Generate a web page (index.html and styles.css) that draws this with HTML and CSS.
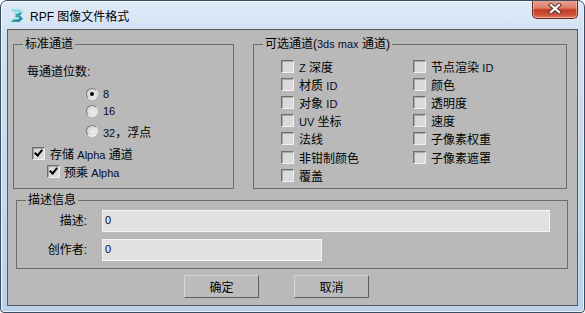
FILE: index.html
```html
<!DOCTYPE html>
<html lang="zh">
<head>
<meta charset="utf-8">
<title>RPF 图像文件格式</title>
<link rel="stylesheet" href="styles.css">
</head>
<body>
<div class="window">
  <div class="titlebar">
    <svg class="appicon" width="14" height="15" viewBox="0 0 14 15">
      <defs>
        <linearGradient id="ig" x1="0" y1="0" x2="1" y2="1">
          <stop offset="0" stop-color="#5fd0d6"/>
          <stop offset="1" stop-color="#0f7f8c"/>
        </linearGradient>
      </defs>
      <path d="M1 1h8l4 3.3-3 3.2 3 3.3-4 3.2H1l2.2-2.8H8.2l1-0.9-1-1H4.6l1.4-1.8-1.4-1.9h3.6l1-0.9-1-0.9H3.2z" fill="url(#ig)"/>
      <path d="M1 1h8l4 3.3-1.2 1.2L8.6 3.6H3.2z" fill="#8fe6ea"/>
    </svg>
    <span class="title"><span class="en">RPF</span> 图像文件格式</span>
    <div class="close">
      <svg width="14" height="11" viewBox="0 0 14 11">
        <path d="M3 2l8 7M11 2l-8 7" stroke="#5a3a36" stroke-width="4.2" stroke-linecap="square"/>
        <path d="M3 2l8 7M11 2l-8 7" stroke="#ffffff" stroke-width="2.2" stroke-linecap="square"/>
      </svg>
    </div>
  </div>
  <div class="client">
    <div class="groups">
      <div class="group std">
        <span class="legend">标准通道</span>
        <div class="label-row">每通道位数:</div>
        <div class="opt-row r1"><span class="radio on"></span><span class="txt"><span class="en">8</span></span></div>
        <div class="opt-row r2"><span class="radio"></span><span class="txt"><span class="en">16</span></span></div>
        <div class="opt-row r3"><span class="radio"></span><span class="txt"><span class="en">32</span>，浮点</span></div>
        <div class="opt-row c1"><span class="check on"></span><span class="txt">存储 <span class="en">Alpha</span> 通道</span></div>
        <div class="opt-row c2"><span class="check on"></span><span class="txt">预乘 <span class="en">Alpha</span></span></div>
      </div>
      <div class="group extra">
        <span class="legend">可选通道(<span class="en">3ds max</span> 通道)</span>
        <div class="extra-grid">
          <div class="item"><span class="check"></span><span class="txt"><span class="en">Z</span> 深度</span></div>
          <div class="item"><span class="check"></span><span class="txt">材质 <span class="en">ID</span></span></div>
          <div class="item"><span class="check"></span><span class="txt">对象 <span class="en">ID</span></span></div>
          <div class="item"><span class="check"></span><span class="txt"><span class="en">UV</span> 坐标</span></div>
          <div class="item"><span class="check"></span><span class="txt">法线</span></div>
          <div class="item"><span class="check"></span><span class="txt">非钳制颜色</span></div>
          <div class="item"><span class="check"></span><span class="txt">覆盖</span></div>
          <div class="item"><span class="check"></span><span class="txt">节点渲染 <span class="en">ID</span></span></div>
          <div class="item"><span class="check"></span><span class="txt">颜色</span></div>
          <div class="item"><span class="check"></span><span class="txt">透明度</span></div>
          <div class="item"><span class="check"></span><span class="txt">速度</span></div>
          <div class="item"><span class="check"></span><span class="txt">子像素权重</span></div>
          <div class="item"><span class="check"></span><span class="txt">子像素遮罩</span></div>
        </div>
      </div>
    </div>
    <div class="group desc">
      <span class="legend">描述信息</span>
      <div class="form">
        <label class="flabel">描述:</label>
        <div class="input wide"><span class="en">0</span></div>
        <label class="flabel">创作者:</label>
        <div class="input narrow"><span class="en">0</span></div>
      </div>
    </div>
    <div class="buttons">
      <div class="btn">确定</div>
      <div class="btn">取消</div>
    </div>
  </div>
</div>
</body>
</html>
```
FILE: styles.css
```css
html, body {
  margin: 0;
  padding: 0;
  background: #ffffff;
}
body {
  font-family: "Liberation Sans", "Noto Sans CJK SC", sans-serif;
  font-size: 12px;
  color: #000;
}
.en {
  font-family: "Liberation Sans", sans-serif;
  font-size: 11px;
  color: #0a0a28;
}
.txt {
  white-space: nowrap;
}
.window {
  position: relative;
  width: 585px;
  height: 313px;
  box-sizing: border-box;
  border: 1px solid #3d4d60;
  border-radius: 7px 7px 4px 4px;
  background: linear-gradient(to bottom, #dfeaf7 0%, #cfe0f2 12%, #c4d8ee 60%, #bcd2ea 100%);
  box-shadow: inset 1px 1px 0 #f2f7fc, inset -1px -1px 0 #e8f0f9;
  display: flex;
  flex-direction: column;
  overflow: hidden;
}
.titlebar {
  height: 28px;
  flex: none;
  display: flex;
  align-items: center;
  padding-left: 9px;
  gap: 6px;
}
.appicon {
  display: block;
  margin-top: 1px;
}
.title {
  font-family: "Liberation Sans", "Noto Sans CJK SC", sans-serif;
  font-size: 12px;
  color: #000;
  margin-top: 1px;
}
.title .en {
  font-size: 12px;
  color: #000;
}
.close {
  position: absolute;
  top: -1px;
  right: 6px;
  width: 46px;
  height: 19px;
  box-sizing: border-box;
  border: 1px solid #6b2a20;
  border-top: none;
  border-radius: 0 0 5px 5px;
  background: linear-gradient(to bottom, #e9a796 0%, #dd7b66 45%, #c53b22 55%, #cf553d 85%, #e08a70 100%);
  box-shadow: inset 0 0 0 1px rgba(255, 215, 200, 0.5);
  display: flex;
  align-items: center;
  justify-content: center;
}
.close svg {
  display: block;
  margin-top: -1px;
}
.client {
  flex: none;
  margin: 0 6px;
  height: 277px;
  box-sizing: border-box;
  border: 1px solid #5a5a5a;
  background: #b9b9b9;
  display: flex;
  flex-direction: column;
}
.groups {
  display: flex;
  margin-top: 14px;
  margin-left: 5px;
  gap: 19px;
}
.group {
  position: relative;
  box-sizing: border-box;
  border: 1px solid #6c6c6c;
}
.legend {
  position: absolute;
  top: -9px;
  left: 9px;
  padding: 0 2px;
  line-height: 16px;
  background: #b9b9b9;
  white-space: nowrap;
}
.legend .en {
  font-size: 11px;
}
.std {
  width: 221px;
  height: 145px;
  display: flex;
  flex-direction: column;
  align-items: flex-start;
}
.label-row {
  margin-top: 19px;
  margin-left: 13px;
  height: 16px;
  line-height: 16px;
}
.opt-row {
  height: 16px;
  display: flex;
  align-items: center;
  white-space: nowrap;
}
.r1 { margin-top: 6px; margin-left: 72px; gap: 5px; }
.r2 { margin-top: 1px; margin-left: 72px; gap: 5px; }
.r3 { margin-top: 4px; margin-left: 72px; gap: 5px; }
.c1 { margin-top: 6px; margin-left: 18px; gap: 5px; }
.c2 { margin-top: 2px; margin-left: 33px; gap: 4px; }
.radio {
  width: 12px;
  height: 12px;
  box-sizing: border-box;
  border-radius: 50%;
  border: 1px solid;
  border-color: #7c7c7c #eaeaea #f2f2f2 #7c7c7c;
  background: radial-gradient(circle at 60% 60%, #ececec 0%, #d8d8d8 70%, #bdbdbd 100%);
  display: flex;
  align-items: center;
  justify-content: center;
  flex: none;
}
.radio.on::after {
  content: "";
  width: 4px;
  height: 4px;
  border-radius: 50%;
  background: #000;
}
.check {
  width: 13px;
  height: 13px;
  box-sizing: border-box;
  border: 1px solid;
  border-color: #6f6f6f #f0f0f0 #f0f0f0 #6f6f6f;
  background: #dadada;
  box-shadow: inset 1px 1px 0 #a8a8a8;
  flex: none;
  position: relative;
}
.check.on::after {
  content: "";
  position: absolute;
  left: 3px;
  top: 0px;
  width: 3px;
  height: 6px;
  border: solid #000;
  border-width: 0 2px 2px 0;
  transform: rotate(40deg);
}
.extra {
  width: 314px;
  height: 145px;
  padding: 12px 0 0 27px;
}
.extra-grid {
  display: grid;
  grid-template-rows: repeat(7, 18.2px);
  grid-template-columns: 132px auto;
  grid-auto-flow: column;
}
.item {
  display: flex;
  align-items: center;
  gap: 5px;
  white-space: nowrap;
}
.desc {
  margin-top: 11px;
  margin-left: 8px;
  width: 552px;
  height: 69px;
  padding-top: 9px;
}
.form {
  display: grid;
  grid-template-columns: 70px auto;
  column-gap: 15px;
  row-gap: 7px;
  align-items: center;
  justify-items: start;
}
.flabel {
  justify-self: end;
  line-height: 16px;
}
.input {
  height: 22px;
  box-sizing: border-box;
  border: 1px solid #f4f4f4;
  background: #e1e1e1;
  padding: 2px 0 0 2px;
  line-height: 14px;
}
.wide { width: 448px; }
.narrow { width: 220px; }
.buttons {
  display: flex;
  margin-top: 6px;
  margin-left: 176px;
  gap: 35px;
}
.btn {
  width: 75px;
  height: 23px;
  box-sizing: border-box;
  border: 1px solid;
  border-color: #d6d6d6 #5e5e5e #5e5e5e #d6d6d6;
  background: #bcbcbc;
  display: flex;
  align-items: center;
  justify-content: center;
}
```
